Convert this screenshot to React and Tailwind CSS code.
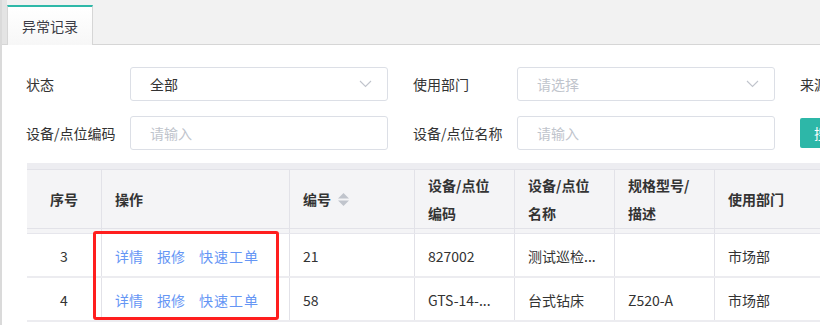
import React from "react";

const cols = [
  { key: "idx", label: "序号", w: "w-[74px]", center: true },
  { key: "op", label: "操作", w: "w-[188px]" },
  { key: "code", label: "编号", w: "w-[125px]", sort: true },
  { key: "dcode", label: ["设备/点位", "编码"], w: "w-[100px]" },
  { key: "dname", label: ["设备/点位", "名称"], w: "w-[100px]" },
  { key: "spec", label: ["规格型号/", "描述"], w: "w-[100px]" },
  { key: "dept", label: "使用部门", w: "w-[120px]" },
];

const rows = [
  { idx: "3", code: "21", dcode: "827002", dname: "测试巡检...", spec: "", dept: "市场部" },
  { idx: "4", code: "58", dcode: "GTS-14-...", dname: "台式钻床", spec: "Z520-A", dept: "市场部" },
];

const Chevron = () => (
  <svg width="13" height="8" viewBox="0 0 13 8" fill="none" className="text-[#c0c4cc]">
    <path d="M1 1l5.5 5.5L12 1" stroke="currentColor" strokeWidth="1.1" />
  </svg>
);

const SortIcon = () => (
  <svg width="13" height="15" viewBox="0 0 13 15" className="ml-[6px] text-[#c0c4cc]">
    <path d="M6.5 1l5.5 5.5H1z" fill="currentColor" />
    <path d="M6.5 14l5.5-5.5H1z" fill="currentColor" />
  </svg>
);

const Field = ({ label, children, last }) => (
  <div className={`flex items-center ${last ? "" : "mr-[25px]"} shrink-0`}>
    <div className="w-[104px] text-[14px] text-[#333]">{label}</div>
    {children}
  </div>
);

const Box = ({ text, placeholder, select }) => (
  <div className="w-[258px] h-[34px] border border-[#dcdfe6] rounded-[3px] flex items-center justify-between pl-[19px] pr-[15px] shrink-0">
    <span className={`text-[14px] ${placeholder ? "text-[#c0c4cc]" : "text-[#333]"}`}>{text}</span>
    {select && <Chevron />}
  </div>
);

export default function App() {
  return (
    <div
      className="w-[820px] h-[325px] overflow-hidden bg-white border-l-2 border-[#dadada]"
      style={{ fontFamily: '"Noto Sans CJK SC", "Noto Sans", sans-serif' }}
    >
      {/* tab bar */}
      <div className="h-[45px] bg-[#f2f2f2] border-b border-[#d6d6d6] flex items-end">
        <div className="w-[5px] h-full bg-[#e4e4e4]" />
        <div className="w-[86px] h-[40px] -mb-px border-t-2 border-t-[#2fb8a8] border-x border-[#d6d6d6] bg-gradient-to-b from-white to-[#f7f7f7] flex items-center justify-center">
          <span className="text-[14px] text-[#3c3c46]">异常记录</span>
        </div>
      </div>

      {/* filters */}
      <div className="pl-[24px] pt-[22px] whitespace-nowrap">
        <div className="flex items-center">
          <Field label="状态">
            <Box text="全部" select />
          </Field>
          <Field label="使用部门">
            <Box text="请选择" placeholder select />
          </Field>
          <Field label="来源" last>
            <Box text="" select />
          </Field>
        </div>
        <div className="flex items-center mt-[15px]">
          <Field label="设备/点位编码">
            <Box text="请输入" placeholder />
          </Field>
          <Field label="设备/点位名称">
            <Box text="请输入" placeholder />
          </Field>
          <button className="h-[30px] px-[14px] rounded-[2px] bg-[#2db7a8] text-white text-[14px] shrink-0">
            搜索
          </button>
        </div>
      </div>

      {/* table */}
      <div className="relative ml-[25px] mt-[13px]">
        <div className="h-[6px] bg-[#ededf1]" />
        <div className="flex h-[60px] bg-[#f4f4f6] border-y border-[#e2e2e8]">
          {cols.map((c, i) => (
            <div
              key={c.key}
              className={`${c.w} shrink-0 flex items-center ${c.center ? "justify-center" : "pl-[13px]"} ${i > 0 ? "border-l border-[#e2e2e8]" : ""} text-[14px] font-bold text-[#333] leading-[28px]`}
            >
              {Array.isArray(c.label) ? (
                <div>
                  {c.label[0]}
                  <br />
                  {c.label[1]}
                </div>
              ) : (
                c.label
              )}
              {c.sort && <SortIcon />}
            </div>
          ))}
        </div>
        <div className="flex h-[5px] bg-[#f4f4f6] border-b border-[#e6e6ec]">
          {cols.map((c, i) => (
            <div key={c.key} className={`${c.w} shrink-0 ${i > 0 ? "border-l border-[#e2e2e8]" : ""}`} />
          ))}
        </div>
        {rows.map((r) => (
          <div key={r.idx} className="flex h-[44px] border-b-2 border-[#ececf0]">
            {cols.map((c, i) => (
              <div
                key={c.key}
                className={`${c.w} shrink-0 flex items-center pt-[3px] ${c.center ? "justify-center" : "pl-[13px]"} ${i > 0 ? "border-l border-[#e2e2e8]" : ""} text-[14px] text-[#333]`}
              >
                {c.key === "op" ? (
                  <div className="flex gap-[14px] text-[#6596f5]">
                    <span>详情</span>
                    <span>报修</span>
                    <span className="tracking-[1px]">快速工单</span>
                  </div>
                ) : (
                  r[c.key]
                )}
              </div>
            ))}
          </div>
        ))}
        <div className="absolute left-[66px] top-[68px] w-[186px] h-[89px] border-[3px] border-[#ff1e1e] rounded-[3px] pointer-events-none" />
      </div>
    </div>
  );
}
